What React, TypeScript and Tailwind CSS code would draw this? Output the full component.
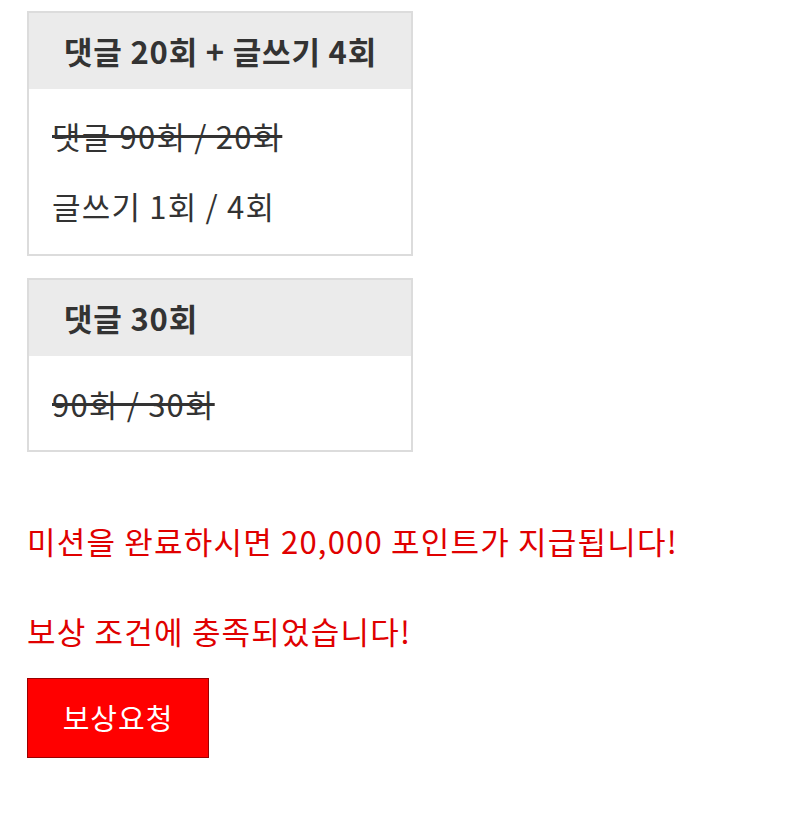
export default function App() {
  const font = { fontFamily: '"Noto Sans CJK KR", "Noto Sans", sans-serif' };
  return (
    <div className="min-h-screen bg-white pl-[27px] pt-[11px]" style={font}>
      {/* Mission card: comments + posts */}
      <div className="w-[386px] border-2 border-[#dcdcdc]">
        <div className="flex h-[76px] items-center bg-[#ebebeb] pl-[35px] text-[31px] font-bold tracking-[0.8px] text-[#333]">
          댓글 20회 + 글쓰기 4회
        </div>
        <div className="flex flex-col gap-[30px] pb-[28px] pl-[23px] pt-[27px] text-[31px] leading-[40px] tracking-[1.2px] text-[#333]">
          <p className="line-through decoration-[#333]">댓글 90회 / 20회</p>
          <p>글쓰기 1회 / 4회</p>
        </div>
      </div>

      {/* Mission card: comments only */}
      <div className="mt-[22px] w-[386px] border-2 border-[#dcdcdc]">
        <div className="flex h-[76px] items-center bg-[#ebebeb] pl-[35px] text-[31px] font-bold tracking-[0.8px] text-[#333]">
          댓글 30회
        </div>
        <div className="pb-[26px] pl-[23px] pt-[28px] text-[31px] leading-[40px] tracking-[1.2px] text-[#333]">
          <p className="line-through decoration-[#333]">90회 / 30회</p>
        </div>
      </div>

      <p className="mt-[69px] text-[31px] leading-[40px] tracking-[1.2px] text-[#e00000]">
        미션을 완료하시면 20,000 포인트가 지급됩니다!
      </p>
      <p className="mt-[50px] text-[31px] leading-[40px] tracking-[1.2px] text-[#e00000]">
        보상 조건에 충족되었습니다!
      </p>
      <button className="mt-[27px] flex h-[80px] w-[182px] items-center justify-center border border-[#9a0000] bg-[#ff0000] text-[29px] tracking-[1px] text-white">
        보상요청
      </button>
    </div>
  );
}
